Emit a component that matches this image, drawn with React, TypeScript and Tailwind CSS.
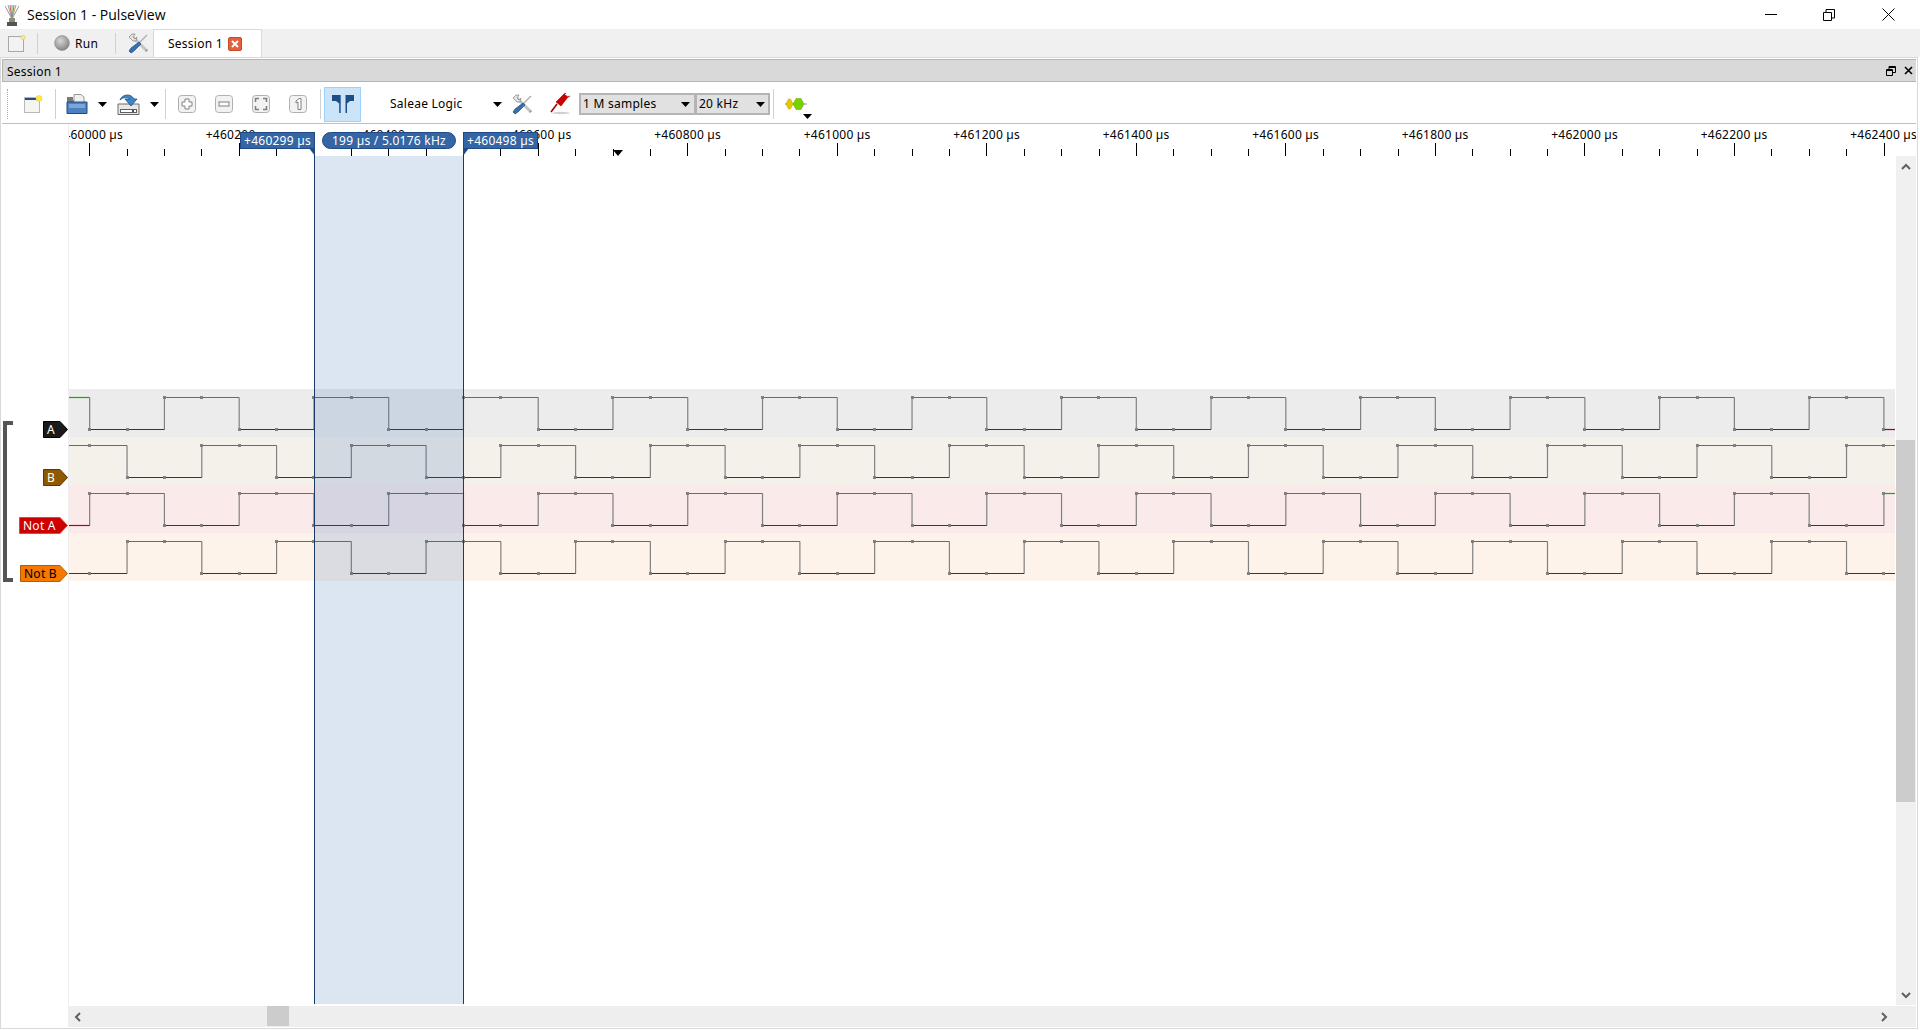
import React from 'react';

const HALF = 74.76;
const SAMPLE = 37.38;
const ORIGIN = 89.67;
const VIEW_LEFT = 69;

interface ITrace {
	name: string;
	rowBg: string;
	startHigh: boolean;
	firstEdge: number;
}

const traces: ITrace[] = [
	{ name: 'A', rowBg: 'bg-[#ececec]', startHigh: true, firstEdge: ORIGIN },
	{ name: 'B', rowBg: 'bg-[#f4f0ea]', startHigh: true, firstEdge: ORIGIN + SAMPLE },
	{ name: 'Not A', rowBg: 'bg-[#faeaea]', startHigh: false, firstEdge: ORIGIN },
	{ name: 'Not B', rowBg: 'bg-[#fef3ea]', startHigh: false, firstEdge: ORIGIN + SAMPLE },
];

const tagStyles: Record<string, { box: string; fill: string; stroke: string; text: string }> = {
	A: { box: 'w-[25px]', fill: '#1a1a1a', stroke: '#000000', text: 'text-white' },
	B: { box: 'w-[25px]', fill: '#8f5902', stroke: '#5c3900', text: 'text-white' },
	'Not A': { box: 'w-[49px]', fill: '#cc0000', stroke: '#ef4040', text: 'text-white' },
	'Not B': { box: 'w-[48px]', fill: '#f57900', stroke: '#b85c00', text: 'text-black' },
};

const rulerLabels = Array.from({ length: 13 }, (_, i) => ({
	text: `+${460000 + i * 200} µs`,
	x: ORIGIN + i * 149.5,
}));

const Wave = ({ trace }: { trace: ITrace }) => {
	const hi = 8.5;
	const lo = 40.5;
	const end = 1895;
	const segs: React.ReactNode[] = [];
	const dots: React.ReactNode[] = [];
	let level = trace.startHigh;
	let x = VIEW_LEFT;
	let edge = trace.firstEdge;
	let k = 0;
	while (x < end) {
		const next = Math.min(edge, end);
		if (edge < end) {
			segs.push(
				<line key={`v${k}`} x1={edge} x2={edge} y1={hi} y2={lo} stroke="#808080" strokeWidth={1.2} />
			);
		}
		segs.push(
			<line
				key={`h${k}`}
				x1={x}
				x2={next}
				y1={level ? hi : lo}
				y2={level ? hi : lo}
				stroke={level ? '#00b400' : '#b80000'}
				strokeWidth={1.2}
			/>
		);
		level = !level;
		x = next;
		edge += HALF;
		k++;
	}
	for (let d = 0; d <= 48; d++) {
		const px = ORIGIN + d * SAMPLE;
		const steps = Math.floor((px + 0.5 - trace.firstEdge) / HALF);
		const passed = px + 0.5 < trace.firstEdge ? 0 : steps + 1;
		const high = passed % 2 === 0 ? trace.startHigh : !trace.startHigh;
		dots.push(
			<rect
				key={d}
				x={Math.floor(px) - 1}
				y={(high ? hi : lo) - 1.5}
				width={3}
				height={3}
				fill="#808080"
			/>
		);
	}
	return (
		<svg width={1826} height={48} viewBox={`${VIEW_LEFT} 0 1826 48`} className="block">
			{segs}
			{dots}
		</svg>
	);
};

const Tag = ({ name }: { name: string }) => {
	const s = tagStyles[name];
	const w = name === 'Not A' ? 49 : name === 'Not B' ? 48 : 25;
	return (
		<div className={`relative h-[17px] ${s.box}`}>
			<svg width={w} height={17} className="absolute inset-0">
				<path
					d={`M0.5 0.5H${w - 8}L${w - 0.5} 8.5L${w - 8} 16.5H0.5Z`}
					fill={s.fill}
					stroke={s.stroke}
				/>
			</svg>
			<span className={`absolute left-[4px] top-0 text-[12px] leading-[17px] ${s.text}`}>{name}</span>
		</div>
	);
};

const AppIcon = () => (
	<svg width={18} height={22} viewBox="0 0 18 22">
		<path d="M9 15L2 2M9 15L5 1" stroke="#9a9a9a" strokeWidth={1} />
		<path d="M9 15L7 1" stroke="#d06060" strokeWidth={1} />
		<path d="M9 15L9 1" stroke="#60b060" strokeWidth={1} />
		<path d="M9 15L11 1" stroke="#6080d0" strokeWidth={1} />
		<path d="M9 15L13 1" stroke="#c0a040" strokeWidth={1} />
		<path d="M9 15L16 2" stroke="#9a9a9a" strokeWidth={1} />
		<rect x={6} y={14} width={6} height={4} fill="#8a8a80" />
		<rect x={4} y={18} width={10} height={4} fill="#55554d" />
	</svg>
);

const NewDoc = ({ strong }: { strong?: boolean }) => (
	<svg width={20} height={19} viewBox="0 0 20 19">
		<rect x={1.5} y={2.5} width={15} height={15} fill={strong ? '#f4f4f0' : '#f2f2f2'} stroke={strong ? '#b8b8b8' : '#a8a8a8'} />
		{strong && <rect x={2} y={3} width={14} height={2} fill="#2a4a80" />}
		<circle cx={16} cy={3.5} r={strong ? 3 : 2.2} fill={strong ? '#ffe94a' : '#f4ec90'} stroke="#d8c840" strokeWidth={0.5} />
	</svg>
);

const Tools = () => (
	<svg width={21} height={21} viewBox="0 0 21 21">
		<path d="M5 4L18 17" stroke="#c4c4c4" strokeWidth={3} />
		<path d="M18 17L19 18" stroke="#909090" strokeWidth={3} />
		<path d="M1 4L4 1L7 1L5 4L7 6L9 4L8 8L5 8Z" fill="#e4e4e4" stroke="#808080" strokeWidth={0.7} />
		<path d="M19 2L11 10" stroke="#b0b0b0" strokeWidth={1.4} />
		<path d="M11 9L13 11L6 18L3 20L1 18L3 15Z" fill="#3a70b0" stroke="#204a87" strokeWidth={0.7} />
	</svg>
);

const Probe = () => (
	<svg width={21} height={22} viewBox="0 0 21 22">
		<ellipse cx={11} cy={20} rx={9} ry={1.2} fill="#d0d0d0" />
		<path d="M1 19L7 11" stroke="#a00000" strokeWidth={1.6} />
		<path d="M6 9L14 1L18 4L11 13Z" fill="#cc0000" stroke="#a00000" strokeWidth={0.6} />
		<path d="M14 1L16 0M18 4L20 3" stroke="#cc0000" />
	</svg>
);

const OpenIcon = () => (
	<svg width={22} height={21} viewBox="0 0 22 21">
		<path d="M1 3H7V6H12V19H1Z" fill="#7a7a7a" />
		<path d="M8 0.5H15L18 3V9H8Z" fill="#f0f0f0" stroke="#9a9a9a" />
		<path d="M1 8H21V19.5H1Z" fill="#4a80c0" stroke="#204a87" />
		<rect x={3} y={10} width={16} height={4} fill="#7aa6d8" />
	</svg>
);

const SaveIcon = () => (
	<svg width={23} height={23} viewBox="0 0 23 23">
		<path d="M1 11H22V21.5H1Z" fill="#e8e8e8" stroke="#6a6a6a" />
		<rect x={3.5} y={16.5} width={16} height={3} fill="#ffffff" stroke="#606060" />
		<rect x={15} y={16.5} width={2} height={3} fill="#505050" />
		<path d="M3 7C5 1 14 0 17 6H20L14 13L8 6H13C11 4 6 4 3 7Z" fill="#3a86c8" stroke="#204a87" strokeWidth={0.8} />
	</svg>
);

const ZoomBtn = ({ glyph }: { glyph: 'in' | 'out' | 'fit' | 'one' }) => (
	<svg width={18} height={18} viewBox="0 0 18 18">
		<rect x={0.5} y={0.5} width={17} height={17} rx={3} fill="#f2f2f2" stroke="#b0b0b0" />
		{glyph === 'in' && <path d="M7 4H11V7H14V11H11V14H7V11H4V7H7Z" fill="#fff" stroke="#808080" />}
		{glyph === 'out' && <rect x={4} y={7} width={10} height={4} fill="#fff" stroke="#808080" />}
		{glyph === 'fit' && (
			<path d="M3.5 7V3.5H7M11 3.5H14.5V7M14.5 11V14.5H11M7 14.5H3.5V11" fill="none" stroke="#808080" strokeWidth={1.6} />
		)}
		{glyph === 'one' && <path d="M7 6L10 3.5H12V14.5H9V7L7 8Z" fill="#fff" stroke="#808080" />}
	</svg>
);

const CursorFlags = () => (
	<svg width={22} height={18} viewBox="0 0 22 18">
		<path d="M0 0H8.7V18H7.2V8.5L4 6H0Z" fill="#1d4f86" />
		<path d="M22 0H13.5V18H15V8.5L18 6H22Z" fill="#1d4f86" />
	</svg>
);

const ChannelIcon = () => (
	<svg width={22} height={12} viewBox="0 0 22 12">
		<path d="M0 6H22" stroke="#909090" />
		<path d="M1 6L3.5 1H5.5L8 6L5.5 11H3.5Z" fill="#e4c800" stroke="#b0a000" strokeWidth={0.5} />
		<path d="M8 6L11 0.5H16L19 6L16 11.5H11Z" fill="#78d000" stroke="#60a800" strokeWidth={0.5} />
	</svg>
);

const Caret = ({ className }: { className?: string }) => (
	<svg width={9} height={5} viewBox="0 0 9 5" className={className}>
		<path d="M0 0H9L4.5 5Z" fill="#000" />
	</svg>
);

const Sep = ({ className }: { className?: string }) => <div className={`w-px bg-[#d0d0d0] ${className}`} />;

const ScrollArrow = ({ d, size = 10 }: { d: string; size?: number }) => (
	<svg width={size} height={size} viewBox="0 0 10 10">
		<path d={d} fill="none" stroke="#606060" strokeWidth={2} />
	</svg>
);

const Ruler = () => {
	const ticks = [];
	for (let i = 0; i <= 48; i++) {
		const x = Math.floor(ORIGIN + i * SAMPLE + 0.1) - 69 + 0.5;
		const major = i % 4 === 0;
		ticks.push(
			<line key={i} x1={x} x2={x} y1={major ? 19 : 25} y2={32} stroke="#000" strokeWidth={1} />
		);
	}
	return (
		<div className="relative h-[32px] ml-[66px] border-l border-[#eeeeee] overflow-hidden">
			{rulerLabels.map(l => (
				<span
					key={l.text}
					style={{ left: l.x - 69 }}
					className="absolute top-[2px] -translate-x-1/2 whitespace-nowrap text-[12px] leading-[18px] text-black"
				>
					{l.text}
				</span>
			))}
			<svg width={1849} height={32} className="absolute left-0 top-0">
				{ticks}
				<path d="M544 26H554L549 32Z" fill="#000" />
			</svg>
		</div>
	);
};

export default function App() {
	return (
		<div className="w-[1920px] h-[1030px] overflow-hidden bg-white flex flex-col text-[12px] tracking-[0.25px] text-black font-['Noto_Sans','Liberation_Sans',sans-serif]">
			<div className="h-[29px] flex items-center shrink-0 relative tracking-normal">
				<div className="ml-[3px] mr-[6px] flex"><AppIcon /></div>
				<span className="text-[14px] leading-[29px] font-['Open_Sans',sans-serif]">Session 1 - PulseView</span>
				<div className="ml-auto flex items-center h-full">
					<svg width={12} height={2} className="mr-[46px]"><rect width={12} height={1} fill="#000" /></svg>
					<svg width={12} height={12} className="mr-[47px]" viewBox="0 0 12 12">
						<path d="M0.5 3.5H8.5V11.5H0.5Z M3 3V0.5H11.5V9H9" fill="none" stroke="#000" />
					</svg>
					<svg width={13} height={13} className="mr-[25px]" viewBox="0 0 13 13">
						<path d="M0.5 0.5L12.5 12.5M12.5 0.5L0.5 12.5" stroke="#000" />
					</svg>
				</div>
			</div>

			<div className="h-[28px] bg-[#f0f0f0] flex items-center shrink-0">
				<div className="ml-[7px] flex"><NewDoc /></div>
				<Sep className="h-[21px] ml-[10px]" />
				<svg width={16} height={16} viewBox="0 0 16 16" className="ml-[16px]">
					<defs>
						<radialGradient id="led" cx="40%" cy="35%" r="70%">
							<stop offset="0%" stopColor="#d8d8d8" />
							<stop offset="100%" stopColor="#808080" />
						</radialGradient>
					</defs>
					<circle cx={8} cy={8} r={7.4} fill="url(#led)" stroke="#8a8a8a" strokeWidth={0.6} />
				</svg>
				<span className="ml-[5px] w-[24px] pt-px">Run</span>
				<Sep className="h-[21px] ml-[16px]" />
				<div className="ml-[12px] flex"><Tools /></div>
				<div className="ml-[4px] h-[28px] w-[109px] bg-white border-t border-x border-[#d9d9d9] flex items-center pl-[14px]">
					<span className="w-[54px] pt-px whitespace-nowrap">Session 1</span>
					<div className="ml-[6px] w-[14px] h-[14px] bg-[#e2603e] border border-[#c8482a] rounded-[2px] flex items-center justify-center">
						<svg width={8} height={8} viewBox="0 0 8 8">
							<path d="M1 1L7 7M7 1L1 7" stroke="#fff" strokeWidth={2} />
						</svg>
					</div>
				</div>
			</div>

			<div className="flex-1 mr-[2px] mb-px border border-[#d9d9d9] p-px flex flex-col min-h-0">
				<div className="h-[23px] shrink-0 bg-[#d9d9d9] border-y border-l border-[#b4b4b4] flex items-center pl-[4px]">
					<span className="pt-[2px]">Session 1</span>
					<svg width={10} height={10} viewBox="0 0 10 10" className="ml-auto">
						<path d="M0.5 3.5H6.5V9.5H0.5Z M3 3V0.5H9.5V6.5H7" fill="none" stroke="#000" />
						<path d="M0.5 4.5H6.5M3 1.5H9.5" stroke="#000" />
					</svg>
					<svg width={9} height={9} viewBox="0 0 9 9" className="ml-[8px] mr-[3px]">
						<path d="M1 1L8 8M8 1L1 8" stroke="#000" strokeWidth={1.6} />
					</svg>
				</div>

				<div className="h-[42px] shrink-0 border-b border-[#c0c0c0] flex items-center pt-[3px]">
					<div className="ml-[5px] w-[1px] h-[30px] border-l border-dotted border-[#a8a8a8]" />
					<div className="ml-[15px] flex"><NewDoc strong /></div>
					<Sep className="h-[30px] ml-[12px]" />
					<div className="ml-[10px] flex"><OpenIcon /></div>
					<Caret className="ml-[10px]" />
					<div className="ml-[10px] flex"><SaveIcon /></div>
					<Caret className="ml-[10px]" />
					<Sep className="h-[30px] ml-[6px]" />
					<div className="ml-[12px] flex"><ZoomBtn glyph="in" /></div>
					<div className="ml-[19px] flex"><ZoomBtn glyph="out" /></div>
					<div className="ml-[19px] flex"><ZoomBtn glyph="fit" /></div>
					<div className="ml-[19px] flex"><ZoomBtn glyph="one" /></div>
					<Sep className="h-[30px] ml-[13px]" />
					<div className="ml-[3px] w-[37px] h-[35px] bg-[#cce4f7] border border-[#99d1ff] flex items-center justify-center">
						<CursorFlags />
					</div>
					<span className="ml-[29px] w-[72px] whitespace-nowrap">Saleae Logic</span>
					<Caret className="ml-[31px]" />
					<div className="ml-[10px] flex"><Tools /></div>
					<div className="ml-[17px] flex"><Probe /></div>
					<div className="ml-[8px] w-[117px] h-[22px] bg-[#e1e1e1] border-2 border-[#b4b4b4] flex items-center pl-[2px]">
						<span>1 M samples</span>
						<Caret className="ml-auto mr-[4px]" />
					</div>
					<div className="w-[75px] h-[22px] -ml-px bg-[#e1e1e1] border-2 border-[#b4b4b4] flex items-center pl-[2px]">
						<span>20 kHz</span>
						<Caret className="ml-auto mr-[3px]" />
					</div>
					<Sep className="h-[30px] ml-[3px]" />
					<div className="ml-[11px] flex relative">
						<ChannelIcon />
						<Caret className="absolute left-[18px] top-[16px]" />
					</div>
				</div>

				<div className="flex-1 flex flex-col relative min-h-0">
					<Ruler />

					<div className="h-[849px] flex shrink-0">
						<div className="flex-1 flex flex-col relative">
							<div className="h-[233px] ml-[66px] border-l border-[#eeeeee]" />
							{traces.map(t => (
								<div key={t.name} className="flex h-[48px]">
									<div className="w-[66px] flex justify-end items-end">
										<div className="-mb-px"><Tag name={t.name} /></div>
									</div>
									<div className="w-px bg-[#eeeeee]" />
									<div className={`w-[1826px] ${t.rowBg}`}>
										<Wave trace={t} />
									</div>
								</div>
							))}
							<div className="flex-1 ml-[66px] border-l border-[#eeeeee]" />
						</div>
						<div className="w-[20px] bg-[#f0f0f0] flex flex-col items-center relative">
							<div className="h-[22px] flex items-center"><ScrollArrow d="M1 7L5 3L9 7" /></div>
							<div className="mt-[262px] w-[19px] h-[362px] self-start bg-[#cccccc]" />
							<div className="mt-auto mb-[5px] flex items-center"><ScrollArrow d="M1 3L5 7L9 3" /></div>
						</div>
					</div>

					<div className="h-[21px] mt-px ml-[66px] bg-[#eeeeee] flex items-center relative">
						<div className="ml-[5px] flex"><ScrollArrow d="M7 1L3 5L7 9" /></div>
						<div className="absolute left-[199px] top-0 w-[22px] h-[20px] bg-[#cccccc]" />
						<div className="ml-auto mr-[27px] flex"><ScrollArrow d="M3 1L7 5L3 9" /></div>
					</div>

					<div className="absolute left-[312px] top-[32px] w-[150px] h-[848px] bg-[#2a68b8]/[0.165] border-x border-[#1b3a66]" />

					<div className="absolute left-[238px] top-[8px] w-[75px] h-[17px] bg-[#3465a4] border border-[#204a87] text-white text-[12px] leading-[15px] text-center whitespace-nowrap">
						+460299 µs
					</div>
					<svg width={6} height={8} className="absolute left-[307px] top-[24px]">
						<path d="M6 0V8L0 0Z" fill="#204a87" />
					</svg>
					<div className="absolute left-[320px] top-[8px] w-[134px] h-[17px] bg-[#3465a4] border border-[#204a87] rounded-full text-white text-[12px] leading-[15px] text-center whitespace-nowrap">
						199 µs / 5.0176 kHz
					</div>
					<div className="absolute left-[461px] top-[8px] w-[75px] h-[17px] bg-[#3465a4] border border-[#204a87] text-white text-[12px] leading-[15px] text-center whitespace-nowrap">
						+460498 µs
					</div>
					<svg width={6} height={8} className="absolute left-[461px] top-[24px]">
						<path d="M0 0V8L6 0Z" fill="#204a87" />
					</svg>

					<div className="absolute left-[1px] top-[297px] w-[10px] h-[161px] border-l-[4px] border-y-[4px] border-[#555555]" />
				</div>
			</div>
		</div>
	);
}
